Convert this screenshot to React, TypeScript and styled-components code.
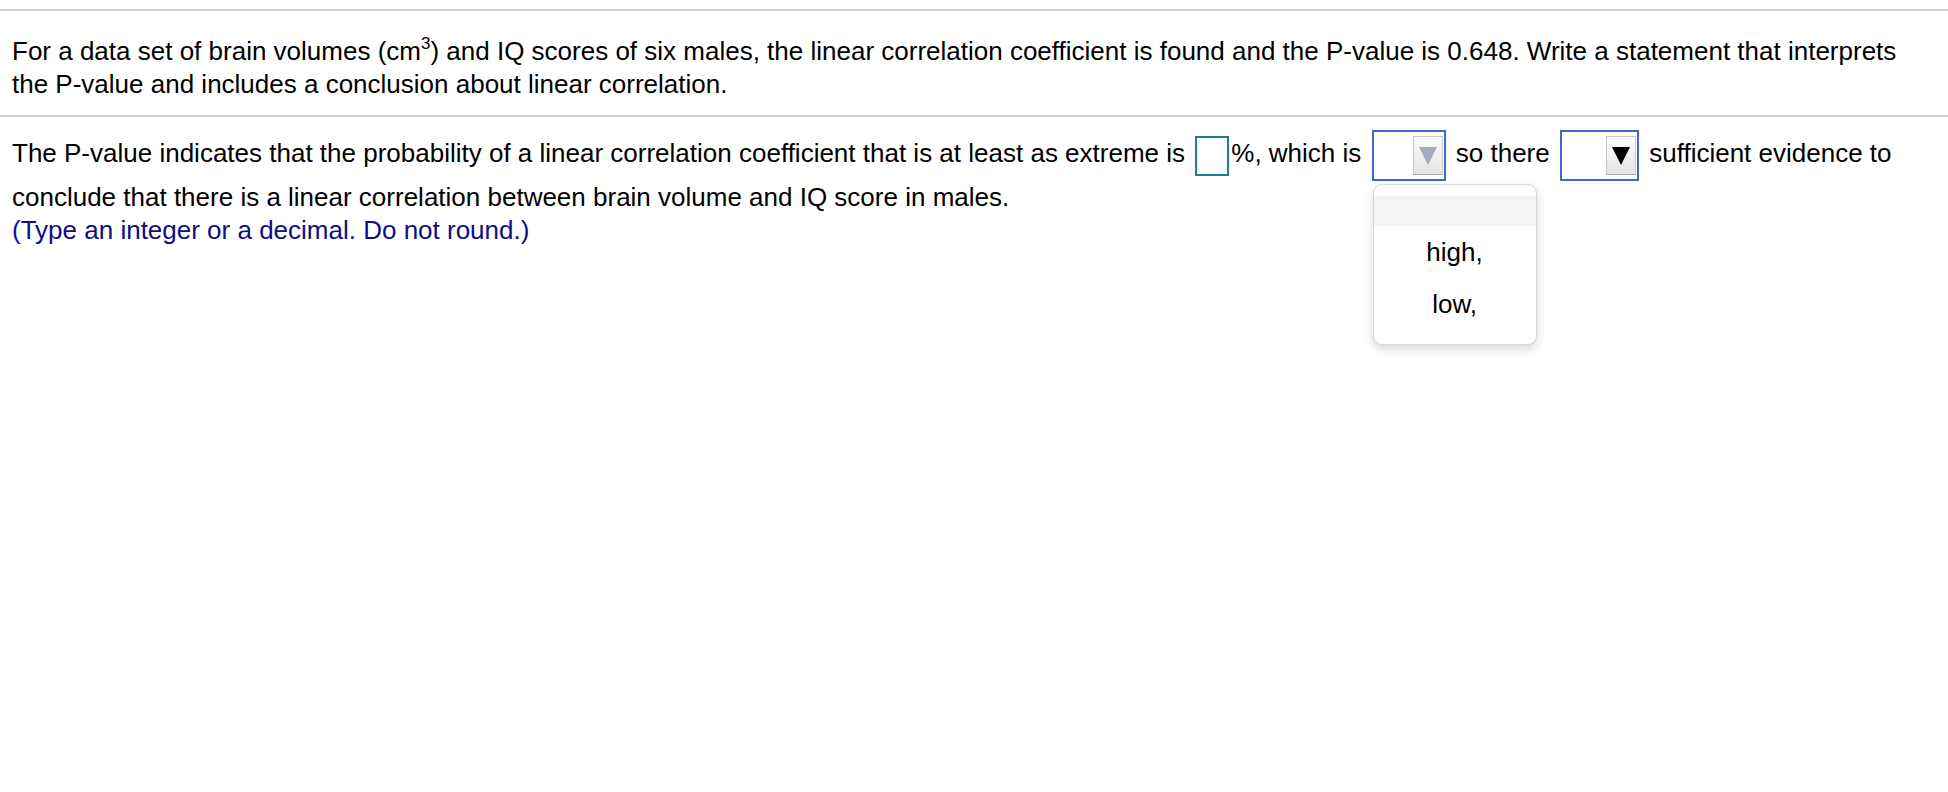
import React from 'react';
import styled, { createGlobalStyle } from 'styled-components';

const GlobalStyle = createGlobalStyle`
  html, body {
    margin: 0;
    padding: 0;
    background: #ffffff;
  }
  body {
    font-family: "Liberation Sans", Arial, Helvetica, sans-serif;
    color: #000000;
  }
`;

const Page = styled.div`
  padding-top: 9px;
  width: 1948px;
  min-height: 792px;
  box-sizing: border-box;
`;

const Question = styled.div`
  border-top: 2px solid #cfd3dd;
  border-bottom: 2px solid #cfd3dd;
  padding: 24px 33px 14px 12px;
  font-size: 26px;
  line-height: 33px;
`;

const Sup = styled.sup`
  font-size: 17px;
  line-height: 0;
  vertical-align: 11px;
`;

const Answer = styled.div`
  padding: 13px 33px 0 12px;
  font-size: 26px;
  line-height: 33px;
`;

const Statement = styled.div``;

const Hint = styled.div`
  color: #0d0d86;
`;

const AnswerBox = styled.span`
  display: inline-block;
  box-sizing: border-box;
  width: 34px;
  height: 40px;
  margin: 0 2px 0 3px;
  border: 2px solid #1d7c9c;
  vertical-align: middle;
  background: #ffffff;
`;

const Select = styled.span<{ $width: number }>`
  position: relative;
  display: inline-flex;
  box-sizing: border-box;
  justify-content: flex-end;
  align-items: center;
  width: ${p => p.$width}px;
  height: 51px;
  margin: 0 3px;
  padding-right: 1px;
  border: 2px solid #3c6acb;
  vertical-align: middle;
  background: #ffffff;
`;

const ArrowButton = styled.span`
  display: flex;
  box-sizing: border-box;
  align-items: center;
  justify-content: center;
  width: 30px;
  height: 39px;
  border: 1px solid #c9c9c9;
  border-bottom-color: #a9a9a9;
  background: linear-gradient(#fcfcfc, #e4e4e4);
`;

const Arrow = styled.span<{ $muted?: boolean }>`
  width: 0;
  height: 0;
  border-left: 9px solid transparent;
  border-right: 9px solid transparent;
  border-top: 18px solid ${p => (p.$muted ? '#a2abbf' : '#000000')};
`;

const Menu = styled.div`
  position: absolute;
  top: calc(100% + 5px);
  left: -1px;
  width: 164px;
  box-sizing: border-box;
  padding: 11px 0 14px;
  border: 1px solid #d7d7d7;
  border-radius: 9px;
  background: #ffffff;
  box-shadow: 0 4px 10px rgba(0, 0, 0, 0.16);
  z-index: 10;
`;

const MenuItem = styled.div<{ $blank?: boolean }>`
  text-align: center;
  font-size: 26px;
  line-height: 30px;
  color: #000000;
  padding: ${p => (p.$blank ? '0' : '11px 0')};
  height: ${p => (p.$blank ? '30px' : 'auto')};
  background: ${p => (p.$blank ? '#f4f4f4' : 'transparent')};
`;

export default function App() {
  return (
    <>
      <GlobalStyle />
      <Page>
        <Question>
          For a data set of brain volumes (cm<Sup>3</Sup>) and IQ scores of six males, the linear
          correlation coefficient is found and the P-value is 0.648. Write a statement that
          interprets the P-value and includes a conclusion about linear correlation.
        </Question>
        <Answer>
          <Statement>
            The P-value indicates that the probability of a linear correlation coefficient that is
            at least as extreme is{' '}
            <AnswerBox />%, which is{' '}
            <Select $width={74}>
              <ArrowButton>
                <Arrow $muted />
              </ArrowButton>
              <Menu>
                <MenuItem $blank />
                <MenuItem>high,</MenuItem>
                <MenuItem>low,</MenuItem>
              </Menu>
            </Select>{' '}
            so there{' '}
            <Select $width={79}>
              <ArrowButton>
                <Arrow />
              </ArrowButton>
            </Select>{' '}
            sufficient evidence to conclude that there is a linear correlation between brain volume
            and IQ score in males.
          </Statement>
          <Hint>(Type an integer or a decimal. Do not round.)</Hint>
        </Answer>
      </Page>
    </>
  );
}
